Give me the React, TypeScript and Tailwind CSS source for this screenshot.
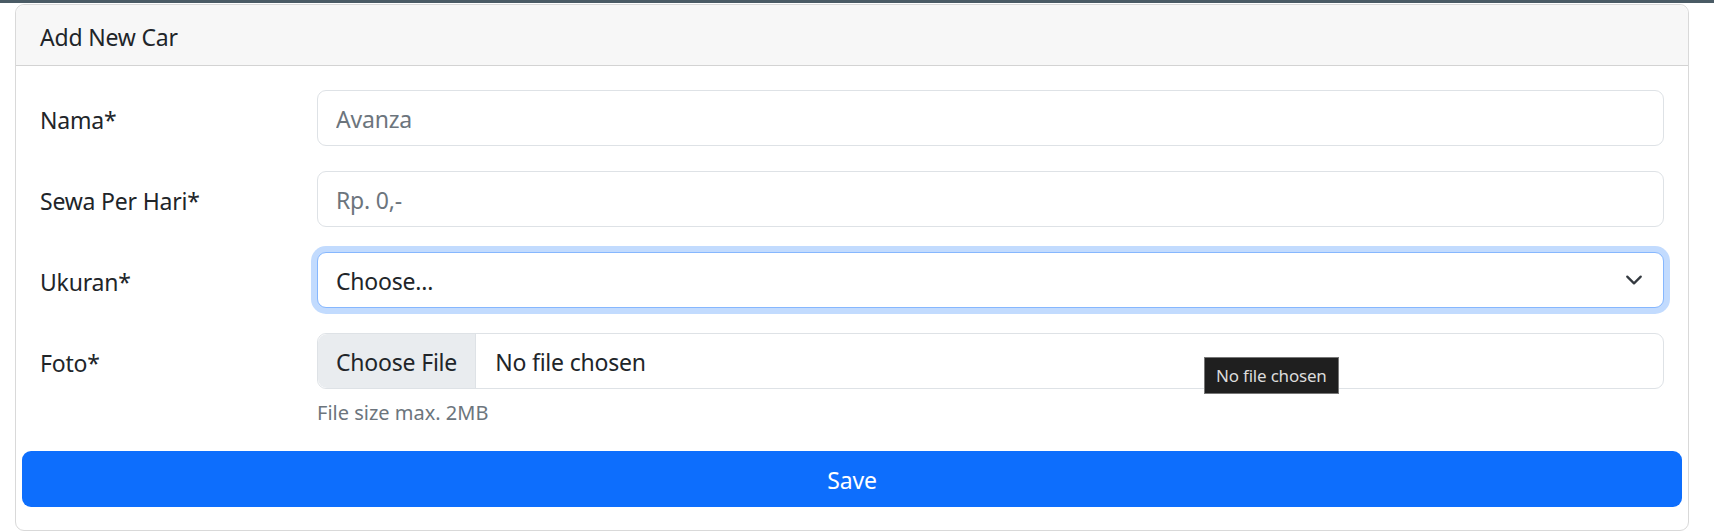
import { FC } from "react";

const font = { fontFamily: '"Noto Sans", "Open Sans", sans-serif' };

type RowProps = {
  label: string;
  children: React.ReactNode;
};

const FormRow: FC<RowProps> = ({ label, children }) => {
  return (
    <div className="grid grid-cols-[277px_1fr] mb-[25px]">
      <label className="pt-[12px] text-[23px] tracking-[-0.2px] leading-[36px] text-[#212529]">{label}</label>
      <div>{children}</div>
    </div>
  );
};

const ChevronDown: FC = () => (
  <svg
    className="absolute right-[21px] top-1/2 -translate-y-1/2 pointer-events-none"
    width="18"
    height="18"
    viewBox="0 0 16 16"
    fill="none"
  >
    <path d="m2 5 6 6 6-6" stroke="#343a40" strokeWidth="2" strokeLinecap="round" strokeLinejoin="round" />
  </svg>
);

export default function App() {
  return (
    <div className="w-[1714px] h-[532px] bg-white overflow-hidden" style={font}>
      <div className="h-[3px] bg-[#4a5b65]" />
      <div className="ml-[15px] mr-[25px] mt-[1px] border border-[#d9d9d9] rounded-[9px] bg-white">
        <div className="bg-[#f7f7f7] border-b border-[#d3d3d3] rounded-t-[9px] px-[24px] pt-[14px] pb-[10px] text-[23px] tracking-[-0.2px] leading-[36px] text-[#212529]">
          Add New Car
        </div>

        <div className="px-[24px] pt-[24px]">
          <FormRow label="Nama*">
            <input
              className="w-full h-[56px] border border-[#dee2e6] rounded-[9px] px-[18px] pt-[2px] text-[23px] tracking-[-0.2px] text-[#212529] placeholder:text-[#6c757d] outline-none"
              placeholder="Avanza"
            />
          </FormRow>

          <FormRow label="Sewa Per Hari*">
            <input
              className="w-full h-[56px] border border-[#dee2e6] rounded-[9px] px-[18px] pt-[2px] text-[23px] tracking-[-0.2px] text-[#212529] placeholder:text-[#6c757d] outline-none"
              placeholder="Rp. 0,-"
            />
          </FormRow>

          <FormRow label="Ukuran*">
            <div className="relative">
              <select
                className="appearance-none w-full h-[56px] border border-[#86b7fe] rounded-[9px] pl-[18px] pr-[54px] pt-[2px] text-[23px] tracking-[-0.2px] text-[#212529] bg-white outline-none shadow-[0_0_0_6px_rgba(13,110,253,0.25)]"
                defaultValue=""
              >
                <option value="">Choose...</option>
                <option value="small">Small</option>
                <option value="medium">Medium</option>
                <option value="large">Large</option>
              </select>
              <ChevronDown />
            </div>
          </FormRow>

          <div className="grid grid-cols-[277px_1fr]">
            <label className="pt-[12px] text-[23px] tracking-[-0.2px] leading-[36px] text-[#212529]">Foto*</label>
            <div>
              <div className="relative flex h-[56px] border border-[#dee2e6] rounded-[9px] text-[23px] tracking-[-0.2px] text-[#212529]">
                <div className="flex items-center bg-[#e9ecef] border-r border-[#dee2e6] rounded-l-[9px] px-[18px] pt-[2px]">
                  Choose File
                </div>
                <div className="flex items-center pl-[19px] pt-[2px]">No file chosen</div>
                <div className="absolute left-[886px] top-[23px] bg-[#1f1f1f] border border-[#767676] px-[11px] h-[37px] flex items-center text-[17px] text-[#dcdcdc]">
                  No file chosen
                </div>
              </div>
              <p className="mt-[8px] text-[20px] leading-[31px] text-[#6c757d]">File size max. 2MB</p>
            </div>
          </div>
        </div>

        <div className="px-[6px] pt-[23px] pb-[23px]">
          <button className="w-full h-[56px] bg-[#0d6efd] rounded-[9px] pt-[2px] text-white text-[23px] tracking-[-0.2px]">
            Save
          </button>
        </div>
      </div>
    </div>
  );
}
